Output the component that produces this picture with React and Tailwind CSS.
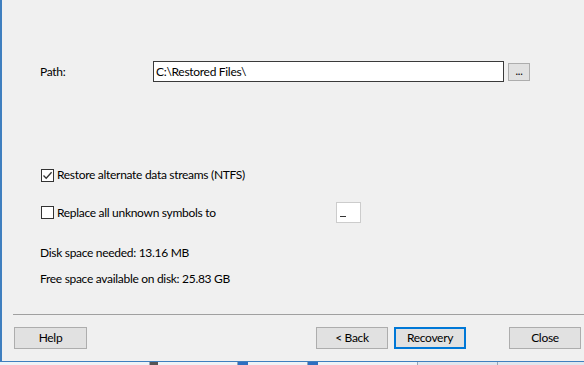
import React from 'react';

const font = { fontFamily: 'Lato, "Noto Sans", Arial, sans-serif' };

const Checkbox = ({ checked }) => (
    <div className="w-[13px] h-[13px] border border-[#333333] bg-white flex items-center justify-center shrink-0">
        {checked && (
            <svg width="11" height="11" viewBox="0 0 11 11">
                <path d="M1.5 5.5 L4.2 8.3 L9.6 2.2" fill="none" stroke="#333333" strokeWidth="1.3" />
            </svg>
        )}
    </div>
);

const Button = ({ children, className = '' }) => (
    <button className={`h-[22px] bg-[#e1e1e1] border border-[#adadad] text-[12px] text-black flex items-center justify-center ${className}`}>
        {children}
    </button>
);

const App = () => {
    return (
        <div className="w-[584px] h-[365px] bg-[#f0f0f0] overflow-hidden flex flex-col text-[12px] tracking-[-0.3px] text-black" style={font}>
            <div className="h-[361px] border-l-2 border-[#3f7fbf] flex flex-col">
                {/* Path row */}
                <div className="mt-[61px] flex items-center h-[21px]">
                    <span className="ml-[38px] w-[113px] leading-[16px]">Path:</span>
                    <div className="w-[351px] h-[21px] border border-[#3a3a3a] bg-white flex items-center pl-[2px] leading-[16px]">
                        C:\Restored Files\
                    </div>
                    <button className="ml-[4px] w-[22px] h-[18px] bg-[#e1e1e1] border border-[#adadad] text-[11px] leading-none flex items-end justify-center pb-[4px]">
                        ...
                    </button>
                </div>

                {/* Options */}
                <div className="mt-[85px] ml-[39px] flex items-center h-[16px]">
                    <Checkbox checked />
                    <span className="ml-[3px] leading-[16px]">Restore alternate data streams (NTFS)</span>
                </div>
                <div className="mt-[19px] ml-[39px] flex items-center h-[21px]">
                    <Checkbox />
                    <span className="ml-[3px] w-[279px] leading-[16px]">Replace all unknown symbols to</span>
                    <div className="w-[25px] h-[21px] border border-[#cccccc] bg-white relative">
                        <div className="absolute left-[3px] bottom-[5px] w-[6px] h-px bg-[#333333]" />
                    </div>
                </div>

                {/* Disk info */}
                <div className="mt-[22px] ml-[38px] leading-[16px]">Disk space needed: 13.16 MB</div>
                <div className="mt-[10px] ml-[38px] leading-[16px]">Free space available on disk: 25.83 GB</div>

                {/* Separator */}
                <div className="mt-[27px] ml-[11px] h-px bg-[#a0a0a0]" />

                {/* Buttons */}
                <div className="mt-[12px] flex items-center">
                    <Button className="ml-[12px] w-[73px]">Help</Button>
                    <div className="flex-1" />
                    <Button className="w-[72px]">&lt; Back</Button>
                    <button className="ml-[6px] w-[72px] h-[22px] bg-[#e1e1e1] border-2 border-[#0078d7] text-[12px] flex items-center justify-center">
                        Recovery
                    </button>
                    <Button className="ml-[43px] w-[72px] mr-[3px]">Close</Button>
                </div>
            </div>

            {/* Background window strip */}
            <div className="h-[4px] border-t border-[#3f7fbf] bg-[#eef2f6] flex">
                <div className="w-[150px] border-r border-[#9aa7b5]" />
                <div className="w-[8px] bg-[#555]" />
                <div className="w-[80px] border-r border-[#9aa7b5]" />
                <div className="w-[10px] bg-[#2e6fc0]" />
                <div className="w-[60px] border-r border-[#9aa7b5]" />
                <div className="w-[10px] bg-[#2e6fc0]" />
                <div className="w-[100px] border-r border-[#9aa7b5]" />
                <div className="w-[80px] border-r border-[#9aa7b5] bg-[#dfe6ee]" />
                <div className="flex-1 bg-[#dfe6ee]" />
            </div>
        </div>
    );
};

export default App;
